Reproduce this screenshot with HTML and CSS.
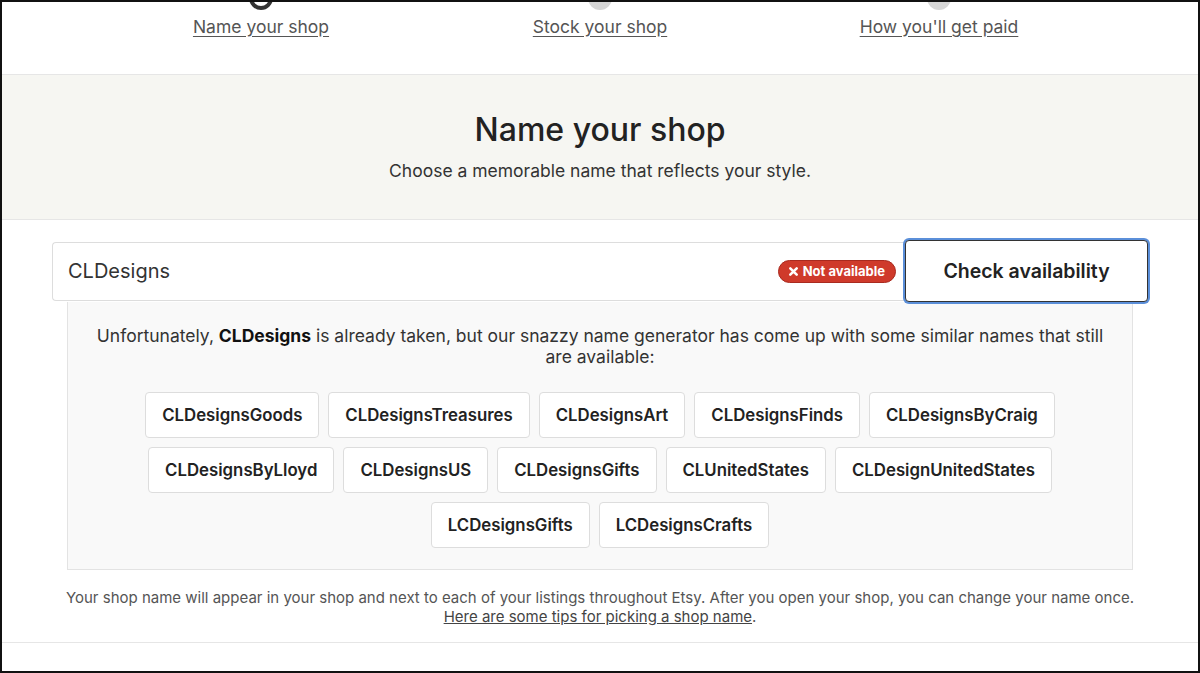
FILE: index.html
```html
<!DOCTYPE html>
<html lang="en">
<head>
  <meta charset="UTF-8">
  <title>Name your shop</title>
  <link rel="stylesheet" href="styles.css">
</head>
<body>
  <div class="frame">
    <div class="steps">
      <div class="step current"><span class="dot"></span><a href="#">Name your shop</a></div>
      <div class="step"><span class="dot"></span><a href="#">Stock your shop</a></div>
      <div class="step"><span class="dot"></span><a href="#">How you'll get paid</a></div>
    </div>

    <section class="intro">
      <h1>Name your shop</h1>
      <p>Choose a memorable name that reflects your style.</p>
    </section>

    <div class="content">
      <div class="name-row">
        <div class="name-field">
          <span>CLDesigns</span>
          <span class="badge">
            <svg width="11" height="11" viewBox="0 0 12 12"><path d="M2.5 2.5l7 7M9.5 2.5l-7 7" stroke="#fff" stroke-width="2.8" stroke-linecap="round"/></svg>
            Not available
          </span>
        </div>
        <button class="check">Check availability</button>
      </div>

      <div class="suggest">
        <p>Unfortunately, <b>CLDesigns</b> is already taken, but our snazzy name generator has come up with some similar names that still are available:</p>
        <div class="chip-row">
          <button class="chip">CLDesignsGoods</button>
          <button class="chip">CLDesignsTreasures</button>
          <button class="chip">CLDesignsArt</button>
          <button class="chip">CLDesignsFinds</button>
          <button class="chip">CLDesignsByCraig</button>
        </div>
        <div class="chip-row">
          <button class="chip">CLDesignsByLloyd</button>
          <button class="chip">CLDesignsUS</button>
          <button class="chip">CLDesignsGifts</button>
          <button class="chip">CLUnitedStates</button>
          <button class="chip">CLDesignUnitedStates</button>
        </div>
        <div class="chip-row">
          <button class="chip">LCDesignsGifts</button>
          <button class="chip">LCDesignsCrafts</button>
        </div>
      </div>

      <p class="note">Your shop name will appear in your shop and next to each of your listings throughout Etsy. After you open your shop, you can change your name once.<br><a href="#">Here are some tips for picking a shop name</a>.</p>
    </div>
  </div>
</body>
</html>
```

FILE: styles.css
```css
* {box-sizing:border-box;}
body {margin:0; font-family:Inter, "Liberation Sans", Arial, sans-serif; color:#222; background:#fff;}
.frame {height:673px; border:2px solid #111; overflow:hidden; background:#fff;}

.steps {display:grid; grid-template-columns:repeat(3, 339px); justify-content:center; height:73px; border-bottom:1px solid #e6e6e6;}
.step {display:flex; flex-direction:column; align-items:center;}
.dot {width:24px; height:24px; margin-top:-16px; border-radius:50%; background:#d6d6d6;}
.step.current .dot {background:#fff; border:4px solid #333;}
.step a {margin-top:6px; font-size:17.5px; color:#555; text-decoration:underline; text-underline-offset:3px;}

.intro {background:#f6f6f2; border-bottom:1px solid #e6e6e6; height:145px; text-align:center; padding-top:35px;}
.intro h1 {margin:0; font-size:32px; font-weight:500; color:#222; line-height:40px;}
.intro p {margin:10px 0 0; font-size:17.5px; color:#333;}

.content {width:1096px; margin:20px auto 0;}
.name-row {display:flex; align-items:center;}
.name-field {flex:1; height:59px; display:flex; align-items:center; justify-content:space-between; padding:0 9px 0 15px; border:1px solid #ddd; border-right:none; border-radius:4px 0 0 4px; font-size:20px; color:#333;}
.badge {display:flex; align-items:center; gap:4px; height:23px; padding:0 10px 0 9px; border-radius:12px; background:#cf3a2b; border:1px solid #a92a1f; color:#fff; font-size:13px; font-weight:700;}
.check {width:243px; height:62px; background:#fff; border:1px solid #333; border-radius:4px; box-shadow:0 0 0 2px #5b8fd9; font-family:inherit; font-size:19.5px; font-weight:600; color:#222;}

.suggest {margin:0 15px; background:#f9f9f9; border:1px solid #e3e3e3; border-top:none; padding:23px 20px 21px;}
.suggest p {margin:0 0 25px; text-align:center; font-size:17.5px; line-height:21px; color:#333;}
.suggest b {color:#111;}
.chip-row {display:flex; justify-content:center; gap:9px; margin-top:9px;}
.chip {height:46px; padding:0 16px; background:#fff; border:1px solid #ddd; border-radius:4px; font-family:inherit; font-size:16.8px; font-weight:600; color:#222;}

.note {margin:18px -52px 0; padding-bottom:16px; border-bottom:1px solid #e6e6e6; text-align:center; font-size:15px; line-height:19px; color:#555;}
.note a {color:#444;}
```
